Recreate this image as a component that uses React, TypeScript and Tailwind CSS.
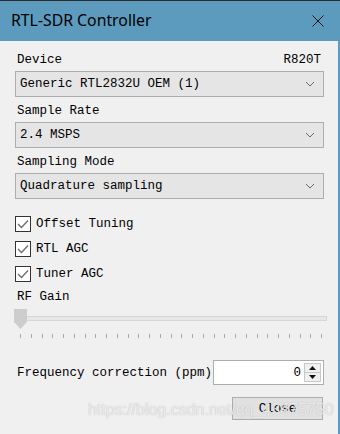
import { ReactNode } from "react";

const mono = "font-[family-name:Liberation_Mono,Courier_New,monospace] text-[12.5px] leading-4 text-black whitespace-nowrap";

function Combo({ value }: { value: string }) {
  return (
    <div className="mt-[3px] h-[26px] flex items-center justify-between border border-[#adadad] bg-[#e5e5e5] pl-[4px] pr-[8px]">
      <span>{value}</span>
      <svg width="10" height="6" viewBox="0 0 10 6">
        <polyline points="1,1 5,5 9,1" fill="none" stroke="#6a6a6a" strokeWidth="1" />
      </svg>
    </div>
  );
}

function Label({ children, right }: { children: ReactNode; right?: string }) {
  return (
    <div className="h-4 flex justify-between pl-[2px] pr-[3px]">
      <span>{children}</span>
      {right && <span>{right}</span>}
    </div>
  );
}

function Check({ label }: { label: string }) {
  return (
    <div className="h-[25px] flex items-center gap-[5px]">
      <div className="w-[16px] h-[16px] border border-[#333] bg-white flex items-center justify-center">
        <svg width="12" height="10" viewBox="0 0 12 10">
          <polyline points="1,5 4.5,8.5 11,1.5" fill="none" stroke="#6b6b6b" strokeWidth="1.3" />
        </svg>
      </div>
      <span>{label}</span>
    </div>
  );
}

export default function App() {
  const ticks = Array.from({ length: 29 });

  return (
    <div className="relative w-[340px] h-[434px] overflow-hidden bg-[#f0f0f0]">
      <div className="h-px bg-[#2a2a2a]" />

      {/* Title bar */}
      <div className="h-10 bg-[#5c9bbd] flex items-center justify-between pl-[11px] pr-[16px]">
        <span className="font-[family-name:Noto_Sans,sans-serif] text-[15.8px] text-black">RTL-SDR Controller</span>
        <svg width="12" height="12" viewBox="0 0 12 12">
          <line x1="0.5" y1="0.5" x2="11.5" y2="11.5" stroke="#111" strokeWidth="1" />
          <line x1="11.5" y1="0.5" x2="0.5" y2="11.5" stroke="#111" strokeWidth="1" />
        </svg>
      </div>

      {/* Body */}
      <div className={`h-[393px] border-r-2 border-[#5c9bbd] pl-[15px] pr-[14px] pt-[11px] ${mono}`}>
        <Label right="R820T">Device</Label>
        <Combo value="Generic RTL2832U OEM (1)" />

        <div className="mt-[6px]">
          <Label>Sample Rate</Label>
        </div>
        <Combo value="2.4 MSPS" />

        <div className="mt-[6px]">
          <Label>Sampling Mode</Label>
        </div>
        <Combo value="Quadrature sampling" />

        <div className="mt-[12px]">
          <Check label="Offset Tuning" />
          <Check label="RTL AGC" />
          <Check label="Tuner AGC" />
        </div>

        <div className="mt-[3px]">
          <Label>RF Gain</Label>
        </div>

        {/* Slider */}
        <div className="relative mt-[4px] h-[30px] -ml-px mr-[-3px]">
          <div className="absolute left-0 right-0 top-[7px] h-[5px] border border-[#d6d6d6] bg-[#e7e7e7]" />
          <svg className="absolute left-0 top-0" width="13" height="20" viewBox="0 0 13 20">
            <polygon points="0,0 13,0 13,13 6.5,20 0,13" fill="#cdcdcd" />
          </svg>
          <div className="absolute left-[6px] right-[5px] top-[25px] flex justify-between">
            {ticks.map((_, i) => (
              <div key={i} className="w-px h-[4px] bg-[#a8a8a8]" />
            ))}
          </div>
        </div>

        {/* Frequency correction */}
        <div className="mt-[21px] h-[25px] flex items-center justify-between">
          <span className="pl-[2px]">Frequency correction (ppm)</span>
          <div className="w-[111px] shrink-0 h-[25px] border border-[#adadad] bg-white flex items-center justify-end pr-[2px]">
            <span className="mr-[3px]">0</span>
            <div className="w-[17px] h-[19px] flex flex-col border border-[#c8c8c8] bg-[#f0f0f0]">
              <div className="flex-1 flex items-center justify-center border-b border-[#c8c8c8]">
                <svg width="7" height="4" viewBox="0 0 7 4">
                  <polygon points="0,4 7,4 3.5,0" fill="#111" />
                </svg>
              </div>
              <div className="flex-1 flex items-center justify-center">
                <svg width="7" height="4" viewBox="0 0 7 4">
                  <polygon points="0,0 7,0 3.5,4" fill="#111" />
                </svg>
              </div>
            </div>
          </div>
        </div>

        <div className="mt-[12px] flex justify-end pr-[1px]">
          <button className="w-[91px] h-[23px] border border-[#adadad] bg-[#e1e1e1] flex items-center justify-center">
            Close
          </button>
        </div>
      </div>

      {/* Watermark */}
      <div className="absolute left-[88px] top-[400px] font-[family-name:Liberation_Sans,sans-serif] text-[16px] leading-5 text-white/75 [text-shadow:0_0_1px_rgba(120,120,120,0.6)]">
        https://blog.csdn.net/qq_43475750
      </div>
    </div>
  );
}
